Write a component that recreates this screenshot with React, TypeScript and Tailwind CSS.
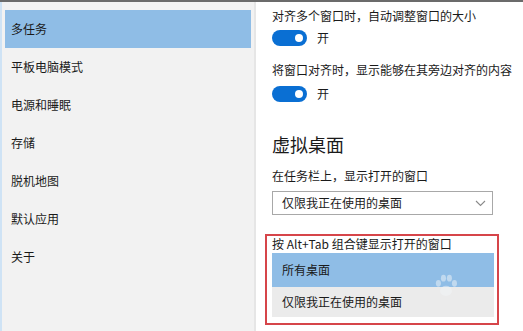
const navItems = ['多任务', '平板电脑模式', '电源和睡眠', '存储', '脱机地图', '默认应用', '关于'];

function Toggle() {
  return (
    <div className="flex items-center gap-[10px]">
      <div className="flex h-[16px] w-[35px] items-center justify-end rounded-full bg-[#0a6fd3] pr-[4px]">
        <div className="h-[8px] w-[8px] rounded-full bg-white" />
      </div>
      <span className="text-[12px] leading-[16px] text-[#1a1a1a]">开</span>
    </div>
  );
}

function Chevron() {
  return (
    <svg width="11" height="7" viewBox="0 0 11 7" fill="none">
      <path d="M1 1l4.5 4.5L10 1" stroke="#8a8a8a" strokeWidth="1.1" />
    </svg>
  );
}

// faint watermark paw over the options
function Paw() {
  return (
    <svg width="32" height="22" viewBox="0 0 34 26" className="absolute left-[163px] top-[38px] opacity-50">
      <ellipse cx="8" cy="11" rx="3" ry="4" fill="#f2f5f8" />
      <ellipse cx="14" cy="5" rx="3" ry="4" fill="#f2f5f8" />
      <ellipse cx="21" cy="5" rx="3" ry="4" fill="#f2f5f8" />
      <ellipse cx="27" cy="11" rx="3" ry="4" fill="#f2f5f8" />
      <ellipse cx="17" cy="20" rx="7" ry="6" fill="#f2f5f8" />
    </svg>
  );
}

export default function App() {
  return (
    <div
      className="flex h-[331px] w-[523px] flex-col overflow-hidden bg-white text-[#1a1a1a]"
      style={{ fontFamily: '"Noto Sans CJK SC", "Noto Sans", sans-serif' }}
    >
      <div className="h-[2px] bg-[#6b6b6b]" />
      <div className="flex flex-1">
        <aside className="flex w-[256px] flex-col border-l-2 border-r-2 border-l-[#cfe3f5] border-r-[#e6e6e6] bg-[#f2f2f2] pl-[3px] pr-[3px] pt-[8px]">
          {navItems.map((item, i) => (
            <div
              key={item}
              className={
                'flex h-[38px] items-center pl-[6px] text-[12px] ' +
                (i === 0 ? 'bg-[#8fbde6]' : '')
              }
            >
              {item}
            </div>
          ))}
        </aside>

        <main className="flex flex-1 flex-col pl-[16px] pt-[6px] text-[12px]">
          <div className="leading-[16px]">对齐多个窗口时，自动调整窗口的大小</div>
          <div className="mt-[6px]">
            <Toggle />
          </div>
          <div className="mt-[16px] leading-[16px]">将窗口对齐时，显示能够在其旁边对齐的内容</div>
          <div className="mt-[8px]">
            <Toggle />
          </div>
          <div className="mt-[29px] text-[18px] leading-[26px]">虚拟桌面</div>
          <div className="mt-[11px] leading-[16px]">在任务栏上，显示打开的窗口</div>
          <div className="mt-[7px] flex h-[24px] w-[221px] items-center justify-between border border-[#a8a8a8] pl-[9px] pr-[6px]">
            <span>仅限我正在使用的桌面</span>
            <Chevron />
          </div>
          <div className="relative ml-[-7px] mt-[19px] h-[91px] w-[234px] border-2 border-[#d6454a] pl-[5px] pr-[3px]">
            <div className="h-[17px] pt-[1px] leading-[14px]">按 Alt+Tab 组合键显示打开的窗口</div>
            <div className="flex h-[34px] items-center bg-[#8fbde6] pl-[10px]">所有桌面</div>
            <div className="flex h-[30px] items-center bg-[#ebebeb] pl-[10px]">仅限我正在使用的桌面</div>
            <Paw />
          </div>
        </main>
      </div>
    </div>
  );
}
